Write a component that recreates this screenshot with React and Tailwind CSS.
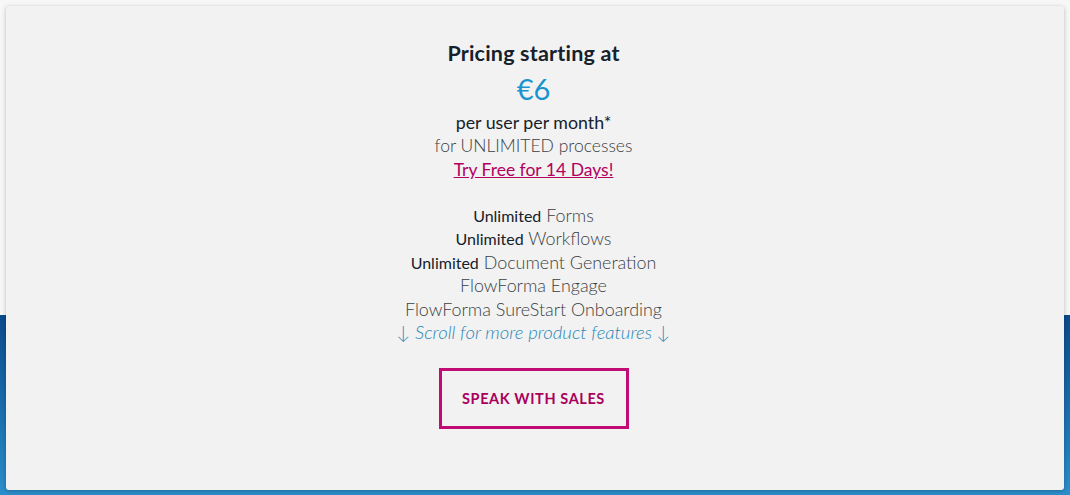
export default function App() {
  return (
    <div className="relative w-[1070px] h-[495px] overflow-hidden bg-[#f7f7f7]" style={{ fontFamily: "Lato, 'Open Sans', sans-serif" }}>
      <div className="absolute left-0 right-0 top-[315px] bottom-0 bg-gradient-to-b from-[#0b4a8c] to-[#2b8fcb]" />
      <div className="relative mx-[6px] mt-[6px] h-[484px] rounded-[3px] bg-[#f2f2f2] shadow-[0_1px_4px_rgba(0,0,0,0.25)] flex flex-col items-center pt-[33px] pr-[3px]">
        <h2 className="text-[21.5px] font-bold text-[#15212b] leading-[28px] tracking-[0.2px]">Pricing starting at</h2>
        <div className="text-[29px] text-[#1a93cf] leading-[40px] mt-[2px]">€6</div>
        <div className="text-[17.8px] text-[#15212b] leading-[23px] mt-[2px]">per user per month*</div>
        <div className="text-[17.5px] font-light text-[#3a3f44] leading-[23px]">for UNLIMITED processes</div>
        <a className="text-[17.5px] text-[#b3005f] underline leading-[23px] mt-[1px]">Try Free for 14 Days!</a>
        <div className="mt-[23px] flex flex-col items-center text-[17.9px] leading-[23.4px] text-[#3a3f44] font-light">
          <div><span className="font-normal text-[#15212b] text-[16px]">Unlimited</span> Forms</div>
          <div><span className="font-normal text-[#15212b] text-[16px]">Unlimited</span> Workflows</div>
          <div><span className="font-normal text-[#15212b] text-[16px]">Unlimited</span> Document Generation</div>
          <div>FlowForma Engage</div>
          <div>FlowForma SureStart Onboarding</div>
          <div className="italic font-light text-[18.5px] text-[#2a87b8]">↓ Scroll for more product features ↓</div>
        </div>
        <button className="mt-[24px] w-[190px] h-[61px] border-[3px] border-[#c10b75] text-[#a9005c] font-bold text-[14.5px] tracking-[0.6px]">SPEAK WITH SALES</button>
      </div>
    </div>
  );
}
